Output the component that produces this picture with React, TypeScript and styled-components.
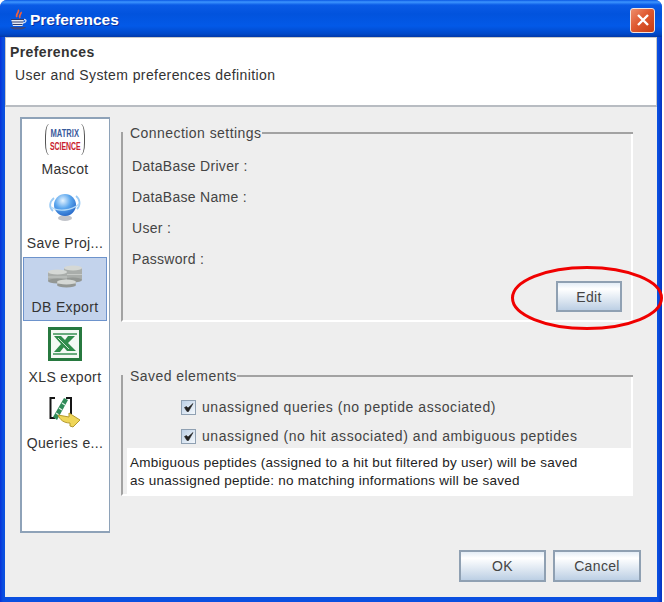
import { createGlobalStyle, styled } from "styled-components";

const Global = createGlobalStyle`
  html, body { margin: 0; padding: 0; background: #fff; }
  body { font-family: "Liberation Sans", Arial, sans-serif; }
`;

function JavaIcon() {
  return (
    <svg width="20" height="22" viewBox="0 0 20 22">
      <path d="M10 1c2 2-3 4-1 7M13 3c1 2-3 3-1 6" fill="none" stroke="#f0603a" strokeWidth="1.8" />
      <path d="M3 10h13l-1.500 7H5z" fill="#e6ebf5" />
      <path d="M3 10.500h13M3.500 13h12M4.500 15.500h10" stroke="#2f3d70" strokeWidth="1.2" />
      <path d="M2 18h16c-1 2-4 2.500-8 2.500S3 20 2 18z" fill="#3a4880" />
      <path d="M16 10.500c3 0 2.500 3-1 3.500" fill="none" stroke="#d5deef" strokeWidth="1.300" />
    </svg>
  );
}

function MatrixLogo() {
  return (
    <LogoBox>
      <LogoTop>MATRIX</LogoTop>
      <LogoBottom>SCIENCE</LogoBottom>
    </LogoBox>
  );
}

function GlobeIcon() {
  return (
    <svg width="32" height="28" viewBox="0 0 32 28">
      <defs>
        <radialGradient id="globe" cx="0.4" cy="0.3" r="0.8">
          <stop offset="0" stopColor="#e6f4ff" />
          <stop offset="0.45" stopColor="#5aa6ee" />
          <stop offset="1" stopColor="#1c5bc0" />
        </radialGradient>
      </defs>
      <ellipse cx="16" cy="25" rx="7" ry="3" fill="#c2c4ca" />
      <circle cx="16" cy="12" r="11" fill="url(#globe)" />
      <path d="M5 5C0 9 0 15 4 18M27 3c4 3 5 9 1 13" fill="none" stroke="#9ccbf4" strokeWidth="1.800" />
      <path d="M2 14c7 5 20 4 28-3" fill="none" stroke="#b4daf8" strokeWidth="1.300" />
    </svg>
  );
}

function DiskIcon() {
  const stack = (x: number, y: number, w: number, h: number) => (
    <g>
      <rect x={x} y={y} width={w} height={h} fill="#a9adaa" />
      <rect x={x} y={y + h / 2} width={w} height="1" fill="#c6c9c6" />
      <ellipse cx={x + w / 2} cy={y + h} rx={w / 2} ry="2.500" fill="#939794" />
      <ellipse cx={x + w / 2} cy={y} rx={w / 2} ry="2.500" fill="#d5d8d5" />
    </g>
  );
  return (
    <svg width="36" height="23" viewBox="0 0 36 23">
      {stack(17, 3, 18, 12)}
      {stack(1, 7, 19, 9)}
      {stack(10, 17, 19, 3)}
    </svg>
  );
}

function ExcelIcon() {
  return (
    <svg width="34" height="34" viewBox="0 0 34 34">
      <rect x="1.500" y="1.500" width="31" height="31" fill="#f4f9f5" stroke="#27793f" strokeWidth="3" />
      <path d="M5 7h24M5 27h24" stroke="#3a9155" strokeWidth="1.500" />
      <path d="M6 9h7l15 15h-9zM20 9h7l-7 7-3-3zM6 25l7-8 3 3-4 5z" fill="#2f8c4b" />
      <path d="M10 11l11 11" stroke="#c6e4ce" strokeWidth="1" />
    </svg>
  );
}

function QueriesIcon() {
  return (
    <svg width="32" height="32" viewBox="0 0 32 32">
      <path d="M6 2H1.500v20H6M17 2h5v16" fill="none" stroke="#151515" strokeWidth="2" />
      <path d="M4 21L15 2l4 2-11 20z" fill="#2f8a58" />
      <path d="M7 17l3 2M10 12l3 2M13 7l3 2" stroke="#d8efe0" strokeWidth="1.400" />
      <path d="M9 19l11 2v-4l11 7-7 7-3-1v-3c-6 0-10-3-12-8z" fill="#efd659" stroke="#b49a2d" strokeWidth="1" />
    </svg>
  );
}

function CheckMark() {
  return (
    <svg width="11" height="11" viewBox="0 0 11 11">
      <path d="M1.500 5.500l2.500 4h1.500L10 1.500 5 6 3.500 4.500z" fill="#222" stroke="#222" strokeWidth="0.6" />
    </svg>
  );
}

export default function App() {
  return (
    <>
      <Global />
      <Page>
        <Window>
          <TitleBar>
            <JavaIcon />
            <TitleText>Preferences</TitleText>
            <CloseButton>
              <svg width="14" height="14" viewBox="0 0 14 14">
                <path d="M2 2l10 10M12 2L2 12" stroke="#fff" strokeWidth="2.400" />
              </svg>
            </CloseButton>
          </TitleBar>
          <Body>
            <Header>
              <HeaderTitle>Preferences</HeaderTitle>
              <HeaderText>User and System preferences definition</HeaderText>
            </Header>
            <Main>
              <SideList>
                <SideItem $h={62} $top={2}>
                  <MatrixLogo />
                  <SideLabel>Mascot</SideLabel>
                </SideItem>
                <SideItem $h={74} $top={9}>
                  <GlobeIcon />
                  <SideLabel>Save Proj...</SideLabel>
                </SideItem>
                <SideItem $h={64} $top={7} $selected>
                  <DiskIcon />
                  <SideLabel>DB Export</SideLabel>
                </SideItem>
                <SideItem $h={70} $top={5}>
                  <ExcelIcon />
                  <SideLabel>XLS export</SideLabel>
                </SideItem>
                <SideItem $h={66} $top={4}>
                  <QueriesIcon />
                  <SideLabel>Queries e...</SideLabel>
                </SideItem>
              </SideList>
              <Panels>
                <Group $h={190}>
                  <GroupTitle>
                    <Legend>Connection settings</Legend>
                    <LegendRule />
                  </GroupTitle>
                  <Fields>
                    <Field>DataBase Driver :</Field>
                    <Field>DataBase Name :</Field>
                    <Field>User :</Field>
                    <Field>Password :</Field>
                  </Fields>
                  <EditRow>
                    <Button $w={66} $h={31}>Edit</Button>
                  </EditRow>
                </Group>
                <Group $h={121}>
                  <GroupTitle>
                    <Legend>Saved elements</Legend>
                    <LegendRule />
                  </GroupTitle>
                  <Checks>
                    <CheckRow>
                      <CheckBox><CheckMark /></CheckBox>
                      unassigned queries (no peptide associated)
                    </CheckRow>
                    <CheckRow>
                      <CheckBox><CheckMark /></CheckBox>
                      unassigned (no hit associated) and ambiguous peptides
                    </CheckRow>
                  </Checks>
                  <Note>
                    Ambiguous peptides (assigned to a hit but filtered by user) will be saved
                    <br />
                    as unassigned peptide: no matching informations will be saved
                  </Note>
                </Group>
              </Panels>
            </Main>
            <Footer>
              <Button $w={87} $h={32}>OK</Button>
              <Button $w={88} $h={32}>Cancel</Button>
            </Footer>
          </Body>
        </Window>
        <Ring width="154" height="66" viewBox="0 0 154 66">
          <ellipse cx="77" cy="33" rx="74.500" ry="30.500" fill="none" stroke="#f00000" strokeWidth="3" />
        </Ring>
      </Page>
    </>
  );
}

const Page = styled.div`
  position: relative;
  width: 664px;
  height: 602px;
  overflow: hidden;
  background: #fff;
`;

const Window = styled.div`
  width: 662px;
  height: 602px;
  box-sizing: border-box;
  display: flex;
  flex-direction: column;
  padding: 0 5px 5px 5px;
  border-radius: 7px 7px 0 0;
  background: linear-gradient(90deg, #0831d9 0, #0a4fe0 3px, #0a4fe0 658px, #0831c0 662px);
`;

const TitleBar = styled.div`
  height: 37px;
  flex: none;
  margin: 0 -5px;
  padding: 3px 7px 0 8px;
  box-sizing: border-box;
  display: flex;
  align-items: center;
  gap: 2px;
  border-radius: 7px 7px 0 0;
  background: linear-gradient(180deg, #0a57e3 0, #3d95ff 2px, #0a5be6 5px, #0253dd 14px, #0359e8 26px, #0148c8 34px, #0238a8 37px);
`;

const TitleText = styled.div`
  flex: 1;
  color: #fff;
  font-size: 15.500px;
  font-weight: 700;
  text-shadow: 1px 1px 0 #0b2f9c;
`;

const CloseButton = styled.div`
  width: 25px;
  height: 25px;
  box-sizing: border-box;
  display: flex;
  align-items: center;
  justify-content: center;
  border: 1px solid #f3e3dc;
  border-radius: 3px;
  background: linear-gradient(135deg, #ee8e6c 0, #df5a32 45%, #c83c12 100%);
`;

const Body = styled.div`
  flex: 1;
  min-height: 0;
  display: flex;
  flex-direction: column;
  background: #eeeeee;
`;

const Header = styled.div`
  height: 70px;
  flex: none;
  box-sizing: border-box;
  padding: 6px 0 0 4px;
  background: #fff;
  border: 1px solid #c9c9c9;
  border-bottom: 2px solid #b8bcc2;
  color: #333;
  font-size: 14px;
  letter-spacing: 0.400px;
`;

const HeaderTitle = styled.div`
  font-weight: 700;
  line-height: 17px;
`;

const HeaderText = styled.div`
  margin: 6px 0 0 5px;
  line-height: 17px;
`;

const Main = styled.div`
  flex: none;
  display: flex;
  padding: 10px 0 0 15px;
  gap: 11px;
`;

const SideList = styled.div`
  width: 90px;
  height: 416px;
  box-sizing: border-box;
  padding: 2px 2px 2px 1px;
  background: #fff;
  border: 2px solid #8ea2b8;
  border-right-width: 1px;
  display: flex;
  flex-direction: column;
`;

const SideItem = styled.div<{ $h: number; $top: number; $selected?: boolean }>`
  height: ${(p) => p.$h}px;
  flex: none;
  box-sizing: border-box;
  display: flex;
  flex-direction: column;
  align-items: center;
  justify-content: space-between;
  padding: ${(p) => p.$top}px 0 4px;
  background: ${(p) => (p.$selected ? "#c3d3ec" : "transparent")};
  border: 1px solid ${(p) => (p.$selected ? "#6d93cc" : "transparent")};
`;

const SideLabel = styled.div`
  color: #333;
  font-size: 14px;
  letter-spacing: 0.350px;
  line-height: 17px;
  white-space: nowrap;
`;

const LogoBox = styled.div`
  width: 40px;
  height: 31px;
  box-sizing: border-box;
  border-left: 1px solid #555;
  border-right: 1px solid #555;
  border-radius: 4px / 12px;
  display: flex;
  flex-direction: column;
  align-items: center;
  justify-content: center;
  font-family: "Liberation Sans", sans-serif;
  font-size: 10.500px;
  font-weight: 700;
  line-height: 13px;
`;

const LogoTop = styled.div`
  color: #3a5a9c;
  transform: scaleX(0.72);
`;

const LogoBottom = styled.div`
  color: #c8202c;
  transform: scaleX(0.66);
`;

const Panels = styled.div`
  width: 512px;
  display: flex;
  flex-direction: column;
  gap: 53px;
  padding-top: 15px;
`;

const Group = styled.div<{ $h: number }>`
  height: ${(p) => p.$h}px;
  box-sizing: border-box;
  border-left: 2px solid #a2a2a2;
  border-right: 2px solid #fff;
  border-bottom: 2px solid #fff;
  display: flex;
  flex-direction: column;
  position: relative;
`;

const GroupTitle = styled.div`
  height: 16px;
  flex: none;
  margin-top: -7px;
  margin-right: -2px;
  display: flex;
  align-items: center;
  padding-left: 7px;
`;

const Legend = styled.div`
  color: #444;
  font-size: 14px;
  letter-spacing: 0.450px;
  line-height: 16px;
  white-space: nowrap;
`;

const LegendRule = styled.div`
  flex: 1;
  height: 2px;
  background: #a2a2a2;
`;

const Fields = styled.div`
  display: flex;
  flex-direction: column;
  gap: 14px;
  padding: 17px 0 0 9px;
`;

const Field = styled.div`
  color: #444;
  font-size: 14px;
  letter-spacing: 0.300px;
  line-height: 17px;
`;

const EditRow = styled.div`
  display: flex;
  justify-content: flex-end;
  padding: 13px 9px 0 0;
`;

const Button = styled.div<{ $w: number; $h: number }>`
  width: ${(p) => p.$w}px;
  height: ${(p) => p.$h}px;
  box-sizing: border-box;
  display: flex;
  align-items: center;
  justify-content: center;
  color: #444;
  font-size: 14px;
  letter-spacing: 0.350px;
  border: 2px solid #8fa0b2;
  background: linear-gradient(180deg, #e4edf6 0, #ffffff 22%, #dfe8f2 60%, #bccfe4 100%);
`;

const Checks = styled.div`
  display: flex;
  flex-direction: column;
  gap: 5px;
  padding: 11px 0 0 58px;
`;

const CheckRow = styled.div`
  height: 24px;
  display: flex;
  align-items: center;
  gap: 6px;
  color: #444;
  font-size: 14px;
  letter-spacing: 0.550px;
  white-space: nowrap;
`;

const CheckBox = styled.span`
  width: 15px;
  height: 15px;
  flex: none;
  box-sizing: border-box;
  display: flex;
  align-items: center;
  justify-content: center;
  border: 1px solid #8fa0b2;
  background: linear-gradient(135deg, #bcd0e6, #f4f8fc);
`;

const Note = styled.div`
  margin: 0 0 0 4px;
  flex: 1;
  background: #fff;
  padding: 6px 0 0 3px;
  color: #222;
  font-size: 13.500px;
  letter-spacing: 0.250px;
  line-height: 18px;
  white-space: nowrap;
`;

const Footer = styled.div`
  display: flex;
  justify-content: flex-end;
  gap: 7px;
  padding: 17px 16px 0 0;
`;

const Ring = styled.svg`
  position: absolute;
  left: 510px;
  top: 265px;
`;
